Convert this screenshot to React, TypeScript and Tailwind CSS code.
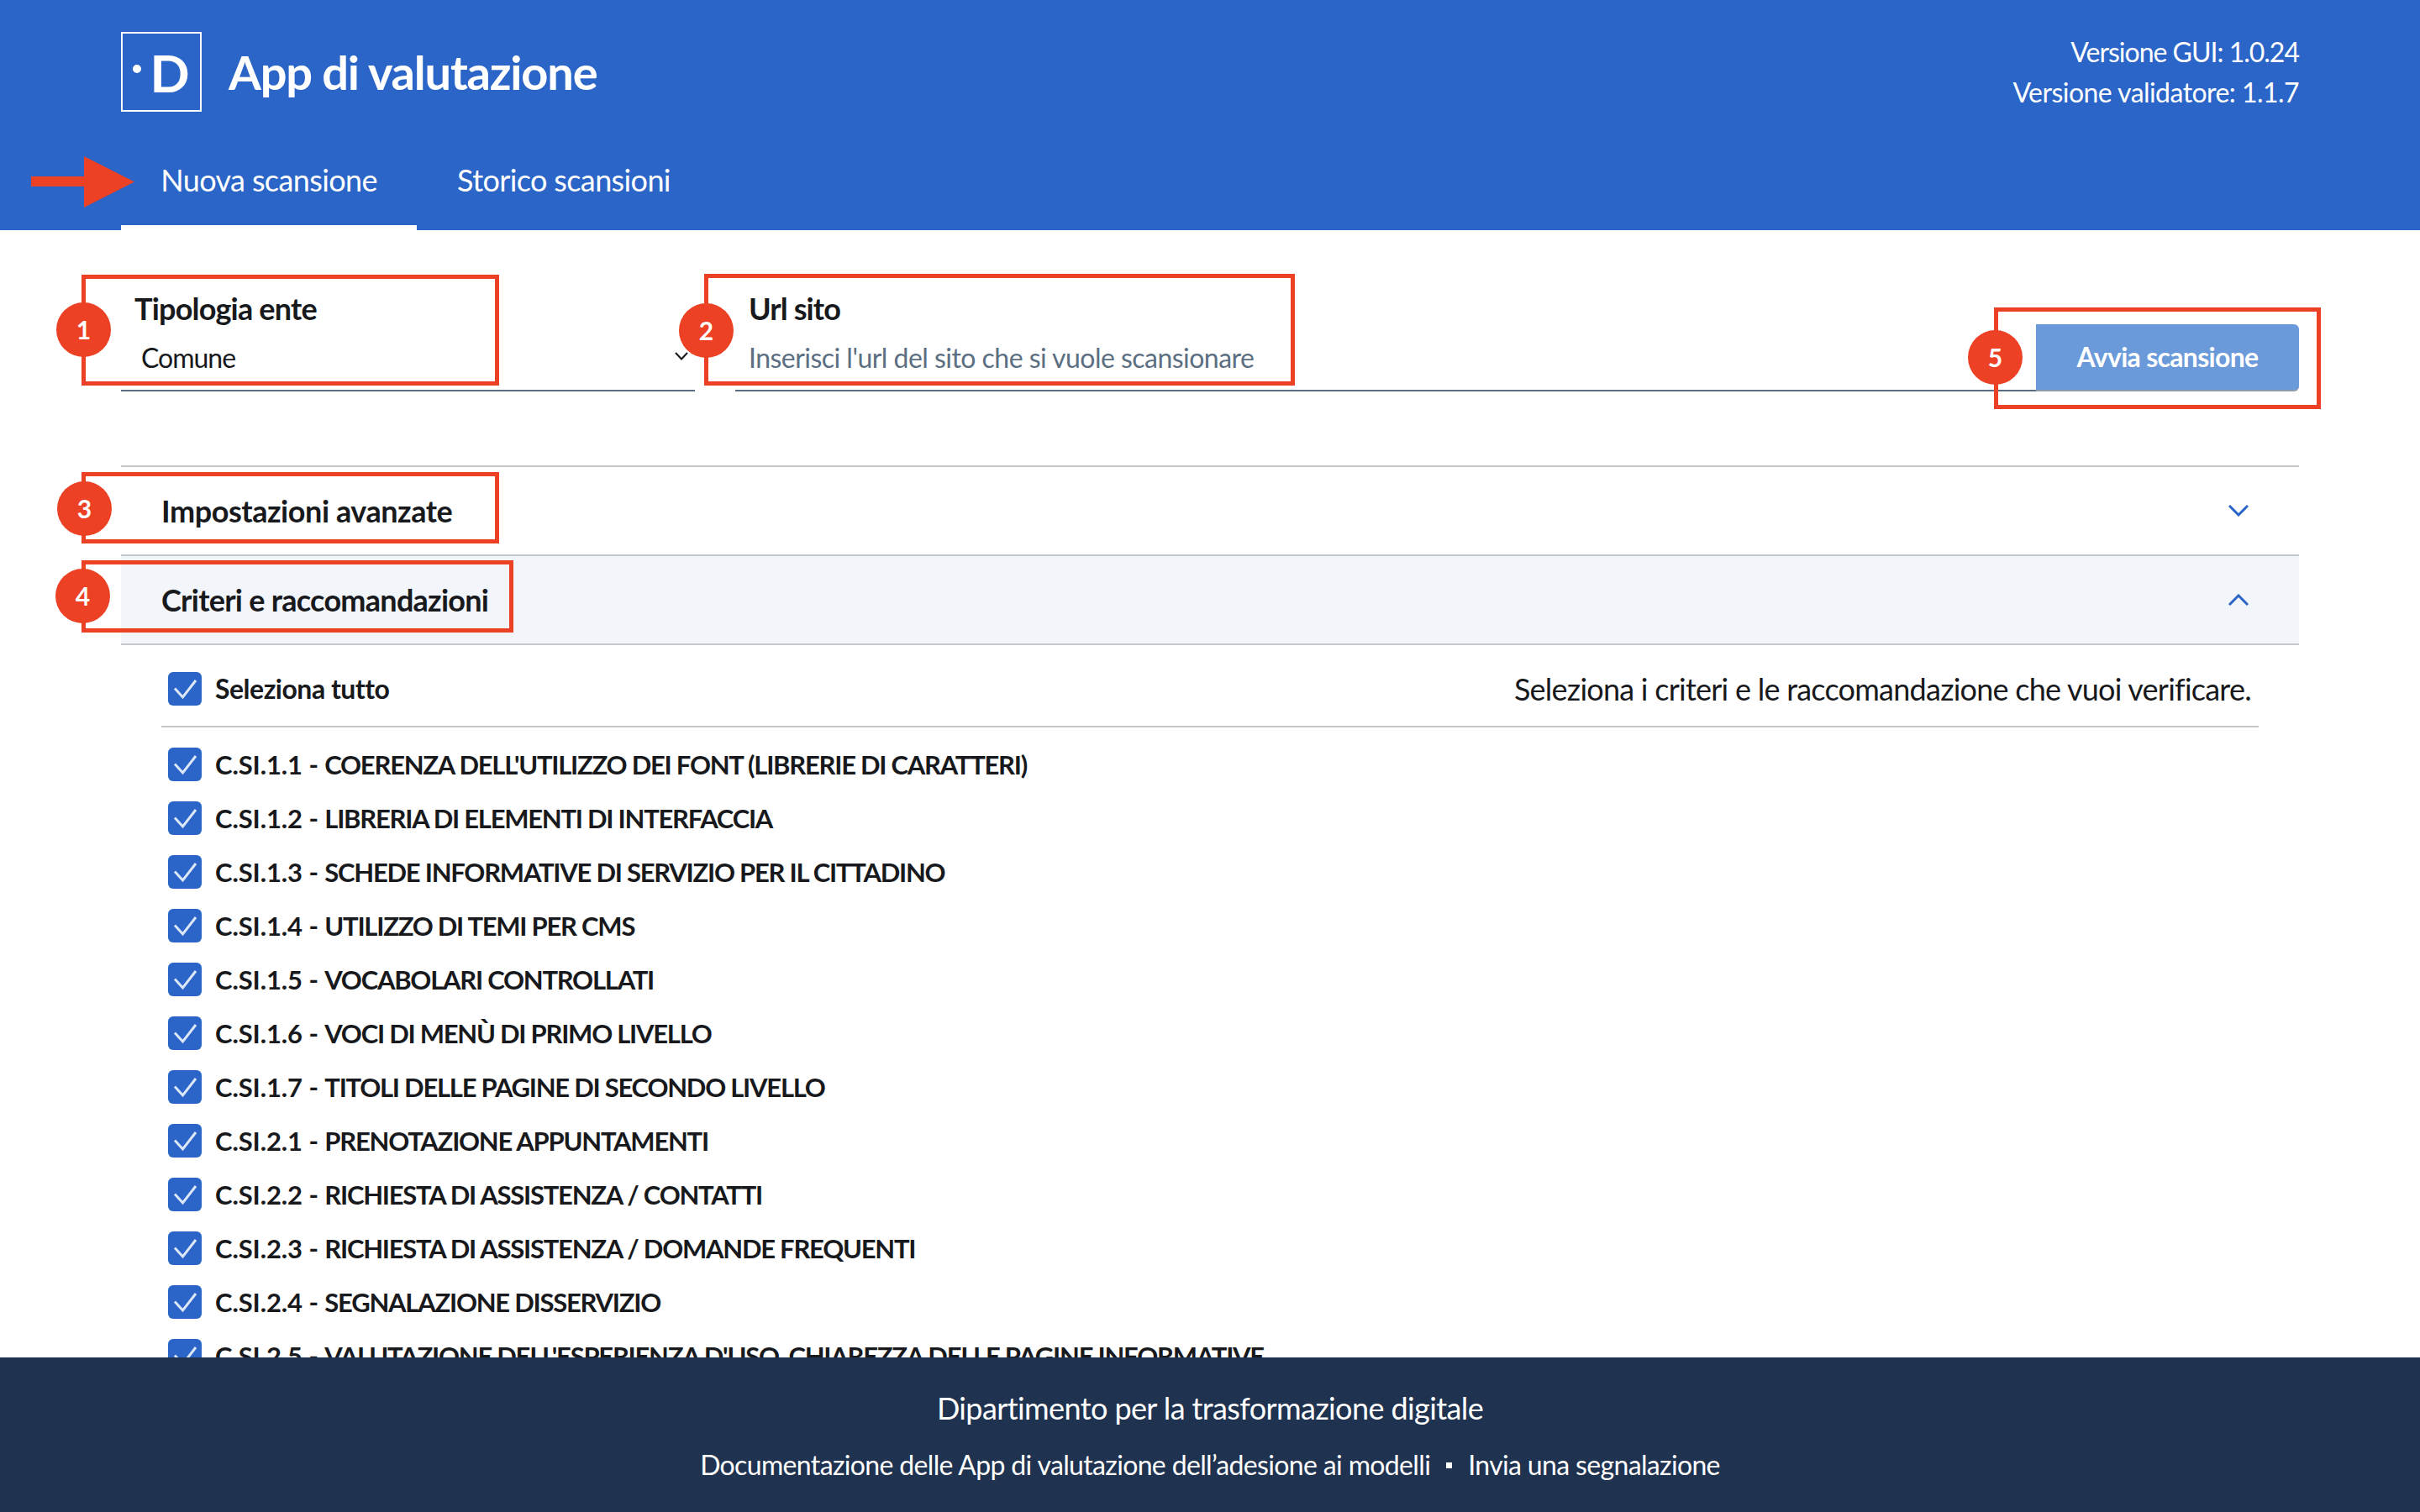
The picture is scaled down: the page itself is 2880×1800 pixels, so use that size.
const criteria = [
  ["C.SI.1.1", "COERENZA DELL'UTILIZZO DEI FONT (LIBRERIE DI CARATTERI)"],
  ["C.SI.1.2", "LIBRERIA DI ELEMENTI DI INTERFACCIA"],
  ["C.SI.1.3", "SCHEDE INFORMATIVE DI SERVIZIO PER IL CITTADINO"],
  ["C.SI.1.4", "UTILIZZO DI TEMI PER CMS"],
  ["C.SI.1.5", "VOCABOLARI CONTROLLATI"],
  ["C.SI.1.6", "VOCI DI MENÙ DI PRIMO LIVELLO"],
  ["C.SI.1.7", "TITOLI DELLE PAGINE DI SECONDO LIVELLO"],
  ["C.SI.2.1", "PRENOTAZIONE APPUNTAMENTI"],
  ["C.SI.2.2", "RICHIESTA DI ASSISTENZA / CONTATTI"],
  ["C.SI.2.3", "RICHIESTA DI ASSISTENZA / DOMANDE FREQUENTI"],
  ["C.SI.2.4", "SEGNALAZIONE DISSERVIZIO"],
  ["C.SI.2.5", "VALUTAZIONE DELL'ESPERIENZA D'USO, CHIAREZZA DELLE PAGINE INFORMATIVE"],
];

function Check() {
  return (
    <svg viewBox="0 0 40 40" className="h-10 w-10 shrink-0">
      <rect width="40" height="40" rx="6" fill="#2B65C8" />
      <path d="M8 19.5 L17.5 30 L33 10" fill="none" stroke="#DCE7F7" strokeWidth="3" />
    </svg>
  );
}

function Chevron({ up }: { up?: boolean }) {
  return (
    <svg viewBox="0 0 24 14" className="h-[14px] w-6">
      <path d={up ? "M1 13 L12 2 L23 13" : "M1 1 L12 12 L23 1"} fill="none" stroke="#2B65C8" strokeWidth="3" />
    </svg>
  );
}

function Callout({ className }: { className: string }) {
  return <div className={`absolute border-[5px] border-[#EC4125] ${className}`} />;
}

function Badge({ n, className }: { n: number; className: string }) {
  return (
    <div className={`absolute flex h-[65px] w-[65px] items-center justify-center rounded-full bg-[#EC4125] text-[30px] font-bold text-white ${className}`}>
      {n}
    </div>
  );
}

export default function App() {
  return (
    <div className="relative flex h-screen w-screen flex-col overflow-hidden bg-white font-['Lato',sans-serif] text-[#17191C]">
      <header className="flex h-[274px] shrink-0 flex-col justify-between bg-[#2B65C8] px-[144px] text-white">
        <div className="flex items-start justify-between pt-[38px]">
          <div className="flex items-center gap-8">
            <div className="flex h-[95px] w-[96px] items-center justify-center gap-[10px] border-2 border-white">
              <span className="mb-2 h-[10px] w-[10px] rounded-full bg-white" />
              <span className="text-[62px] font-bold leading-none">D</span>
            </div>
            <h1 className="text-[56px] font-bold leading-none tracking-[-1.2px]">App di valutazione</h1>
          </div>
          <div className="text-right text-[32px] leading-[48px]">
            <p className="tracking-[-1px]">Versione GUI: 1.0.24</p>
            <p className="tracking-[-0.55px]">Versione validatore: 1.1.7</p>
          </div>
        </div>
        <nav className="flex text-[36px] leading-none tracking-[-0.62px]">
          <a className="flex h-[84px] w-[352px] items-start justify-center border-b-[6px] border-white pt-[6px]">Nuova scansione</a>
          <a className="flex h-[84px] w-[350px] items-start justify-center pt-[6px]">Storico scansioni</a>
        </nav>
      </header>

      <main className="min-h-0 flex-1 overflow-hidden px-[144px]">
        <div className="flex items-end pt-[112px]">
          <div className="relative h-[80px] w-[683px] shrink-0 border-b-2 border-[#5C6F82]">
            <p className="absolute left-4 top-[-37px] text-[36px] font-bold leading-none tracking-[-0.8px]">Tipologia ente</p>
            <p className="absolute left-6 top-[24px] text-[32px] leading-none tracking-[-1px]">Comune</p>
            <svg viewBox="0 0 16 10" className="absolute right-[8px] top-[33px] h-[10px] w-4">
              <path d="M1 1 L8 8.5 L15 1" fill="none" stroke="#17191C" strokeWidth="2" />
            </svg>
          </div>
          <div className="relative ml-[48px] h-[80px] flex-1 border-b-2 border-[#5C6F82]">
            <p className="absolute left-4 top-[-37px] text-[36px] font-bold leading-none tracking-[-0.9px]">Url sito</p>
            <p className="absolute left-4 top-[24px] text-[32px] leading-none tracking-[-0.53px] text-[#5C6F82]">Inserisci l'url del sito che si vuole scansionare</p>
          </div>
          <button className="h-[80px] w-[313px] shrink-0 rounded-tr-md rounded-br-md border-b-[2px] border-[#8E9BAA] bg-[#6A9AD9] text-[32px] font-bold tracking-[-0.7px] text-white">
            Avvia scansione
          </button>
        </div>

        <section className="mt-[88px]">
          <div className="flex h-[106px] items-center justify-between border-t-2 border-[#C5C7C9] pl-[48px] pr-[60px]">
            <h2 className="text-[36px] font-bold leading-none tracking-[-0.45px]">Impostazioni avanzate</h2>
            <Chevron />
          </div>
          <div className="flex h-[108px] items-center justify-between border-y-2 border-[#C5C7C9] bg-[#F2F5FA] pl-[48px] pr-[60px]">
            <h2 className="text-[36px] font-bold leading-none tracking-[-0.73px]">Criteri e raccomandazioni</h2>
            <Chevron up />
          </div>
          <div className="px-[48px]">
            <div className="flex h-[98px] items-center justify-between border-b-2 border-[#C5C7C9] pl-2 pt-[8px] pr-[9px]">
              <label className="flex items-center gap-4 text-[32px] font-bold tracking-[-0.5px]">
                <Check />
                Seleziona tutto
              </label>
              <p className="text-[36px] tracking-[-0.75px]">Seleziona i criteri e le raccomandazione che vuoi verificare.</p>
            </div>
            <ul className="flex flex-col gap-6 pl-2 pt-6">
              {criteria.map(([code, title]) => (
                <li key={code} className="flex h-10 items-center gap-4 text-[31px] font-bold tracking-[-1.25px] whitespace-nowrap">
                  <Check />
                  <span>
                    <span className="tracking-[-0.1px]">{code} - </span>
                    {title}
                  </span>
                </li>
              ))}
            </ul>
          </div>
        </section>
      </main>

      <footer className="flex h-[184px] shrink-0 flex-col items-center bg-[#1F324F] pt-[36px] text-white">
        <p className="text-[36px] leading-[48px] tracking-[-0.6px]">Dipartimento per la trasformazione digitale</p>
        <p className="mt-5 flex items-center gap-[19px] text-[32px] leading-[48px] tracking-[-0.65px]">
          Documentazione delle App di valutazione dell’adesione ai modelli
          <span className="h-[7px] w-[7px] bg-white" />
          Invia una segnalazione
        </p>
      </footer>

      {/* annotations drawn over the screenshot */}
      <svg viewBox="0 0 123 61" className="absolute left-[37px] top-[186px] h-[61px] w-[123px]">
        <path d="M0 24 H63 V0 L123 30.5 L63 61 V36 H0 Z" fill="#EC4125" />
      </svg>
      <Callout className="left-[97px] top-[327px] h-[132px] w-[497px]" />
      <Callout className="left-[838px] top-[326px] h-[133px] w-[703px]" />
      <Callout className="left-[2373px] top-[366px] h-[121px] w-[389px]" />
      <Callout className="left-[97px] top-[562px] h-[85px] w-[497px]" />
      <Callout className="left-[97px] top-[667px] h-[86px] w-[514px]" />
      <Badge n={1} className="left-[67px] top-[360px]" />
      <Badge n={2} className="left-[808px] top-[361px]" />
      <Badge n={3} className="left-[68px] top-[573px]" />
      <Badge n={4} className="left-[66px] top-[677px]" />
      <Badge n={5} className="left-[2342px] top-[393px]" />
    </div>
  );
}
